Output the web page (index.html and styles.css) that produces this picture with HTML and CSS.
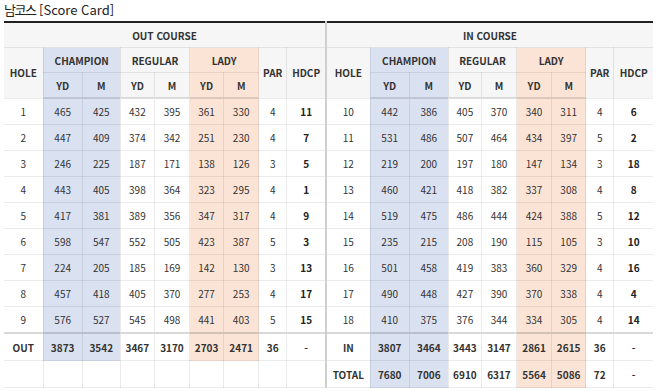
FILE: index.html
```html
<!DOCTYPE html>
<html lang="ko">
<head>
<meta charset="utf-8">
<title>남코스 Score Card</title>
<link rel="stylesheet" href="styles.css">
</head>
<body>
<h1 class="title"><span class="ko">남코스</span> [Score Card]</h1>
<table class="card">
  <colgroup>
    <col class="w39"><col class="w39"><col class="w38"><col class="w34"><col class="w35"><col class="w34"><col class="w35"><col class="w28"><col class="w39 sepcol">
    <col class="w44"><col class="w39"><col class="w39"><col class="w33"><col class="w35"><col class="w35"><col class="w34"><col class="w28"><col class="w39">
  </colgroup>
  <thead>
    <tr class="h1">
      <th colspan="9" class="sep">OUT COURSE</th>
      <th colspan="9">IN COURSE</th>
    </tr>
    <tr class="h2">
      <th rowspan="2">HOLE</th><th colspan="2" class="ch">CHAMPION</th><th colspan="2">REGULAR</th><th colspan="2" class="la">LADY</th><th rowspan="2">PAR</th><th rowspan="2" class="sep">HDCP</th>
      <th rowspan="2">HOLE</th><th colspan="2" class="ch">CHAMPION</th><th colspan="2">REGULAR</th><th colspan="2" class="la">LADY</th><th rowspan="2">PAR</th><th rowspan="2">HDCP</th>
    </tr>
    <tr class="h3">
      <th class="ch">YD</th><th class="ch">M</th><th>YD</th><th>M</th><th class="la">YD</th><th class="la">M</th>
      <th class="ch">YD</th><th class="ch">M</th><th>YD</th><th>M</th><th class="la">YD</th><th class="la">M</th>
    </tr>
  </thead>
  <tbody>
    <tr><td>1</td><td class="ch">465</td><td class="ch">425</td><td>432</td><td>395</td><td class="la">361</td><td class="la">330</td><td>4</td><td class="hd sep">11</td>
        <td>10</td><td class="ch">442</td><td class="ch">386</td><td>405</td><td>370</td><td class="la">340</td><td class="la">311</td><td>4</td><td class="hd">6</td></tr>
    <tr><td>2</td><td class="ch">447</td><td class="ch">409</td><td>374</td><td>342</td><td class="la">251</td><td class="la">230</td><td>4</td><td class="hd sep">7</td>
        <td>11</td><td class="ch">531</td><td class="ch">486</td><td>507</td><td>464</td><td class="la">434</td><td class="la">397</td><td>5</td><td class="hd">2</td></tr>
    <tr><td>3</td><td class="ch">246</td><td class="ch">225</td><td>187</td><td>171</td><td class="la">138</td><td class="la">126</td><td>3</td><td class="hd sep">5</td>
        <td>12</td><td class="ch">219</td><td class="ch">200</td><td>197</td><td>180</td><td class="la">147</td><td class="la">134</td><td>3</td><td class="hd">18</td></tr>
    <tr><td>4</td><td class="ch">443</td><td class="ch">405</td><td>398</td><td>364</td><td class="la">323</td><td class="la">295</td><td>4</td><td class="hd sep">1</td>
        <td>13</td><td class="ch">460</td><td class="ch">421</td><td>418</td><td>382</td><td class="la">337</td><td class="la">308</td><td>4</td><td class="hd">8</td></tr>
    <tr><td>5</td><td class="ch">417</td><td class="ch">381</td><td>389</td><td>356</td><td class="la">347</td><td class="la">317</td><td>4</td><td class="hd sep">9</td>
        <td>14</td><td class="ch">519</td><td class="ch">475</td><td>486</td><td>444</td><td class="la">424</td><td class="la">388</td><td>5</td><td class="hd">12</td></tr>
    <tr><td>6</td><td class="ch">598</td><td class="ch">547</td><td>552</td><td>505</td><td class="la">423</td><td class="la">387</td><td>5</td><td class="hd sep">3</td>
        <td>15</td><td class="ch">235</td><td class="ch">215</td><td>208</td><td>190</td><td class="la">115</td><td class="la">105</td><td>3</td><td class="hd">10</td></tr>
    <tr><td>7</td><td class="ch">224</td><td class="ch">205</td><td>185</td><td>169</td><td class="la">142</td><td class="la">130</td><td>3</td><td class="hd sep">13</td>
        <td>16</td><td class="ch">501</td><td class="ch">458</td><td>419</td><td>383</td><td class="la">360</td><td class="la">329</td><td>4</td><td class="hd">16</td></tr>
    <tr><td>8</td><td class="ch">457</td><td class="ch">418</td><td>405</td><td>370</td><td class="la">277</td><td class="la">253</td><td>4</td><td class="hd sep">17</td>
        <td>17</td><td class="ch">490</td><td class="ch">448</td><td>427</td><td>390</td><td class="la">370</td><td class="la">338</td><td>4</td><td class="hd">4</td></tr>
    <tr><td>9</td><td class="ch">576</td><td class="ch">527</td><td>545</td><td>498</td><td class="la">441</td><td class="la">403</td><td>5</td><td class="hd sep">15</td>
        <td>18</td><td class="ch">410</td><td class="ch">375</td><td>376</td><td>344</td><td class="la">334</td><td class="la">305</td><td>4</td><td class="hd">14</td></tr>
    <tr class="sum first"><td>OUT</td><td class="ch">3873</td><td class="ch">3542</td><td>3467</td><td>3170</td><td class="la">2703</td><td class="la">2471</td><td>36</td><td class="sep">-</td>
        <td>IN</td><td class="ch">3807</td><td class="ch">3464</td><td>3443</td><td>3147</td><td class="la">2861</td><td class="la">2615</td><td>36</td><td>-</td></tr>
    <tr class="sum"><td></td><td></td><td></td><td></td><td></td><td></td><td></td><td></td><td class="sep"></td>
        <td>TOTAL</td><td class="ch">7680</td><td class="ch">7006</td><td>6910</td><td>6317</td><td class="la">5564</td><td class="la">5086</td><td>72</td><td>-</td></tr>
  </tbody>
</table>
</body>
</html>
```

FILE: styles.css
```css
html, body {
  margin: 0;
  padding: 0;
  background: #ffffff;
}
body {
  padding: 2px 4px 0 4px;
  font-family: "Noto Sans CJK KR", "Noto Sans", sans-serif;
  color: #333333;
}
.title {
  margin: 0;
  height: 19px;
  font-size: 13px;
  line-height: 16px;
  font-weight: 400;
  color: #222222;
}
.title .ko {
  letter-spacing: -1.5px;
}
.card {
  width: 649px;
  table-layout: fixed;
  border-collapse: collapse;
  border-top: 2px solid #222222;
  font-size: 10px;
}
.w28 { width: 28px; }
.w33 { width: 33px; }
.w34 { width: 34px; }
.w35 { width: 35px; }
.w38 { width: 38px; }
.w39 { width: 39px; }
.w44 { width: 44px; }
.card th,
.card td {
  padding: 0;
  text-align: center;
  vertical-align: middle;
  border: 1px solid rgba(0, 0, 0, 0.08);
  white-space: nowrap;
}
.card th {
  background: #f6f6f6;
  font-weight: 700;
  color: #333333;
}
.card tr.h1 th,
.card tr.h2 th,
.card tr.h3 th {
  height: 24px;
}
.card tr.h3 th {
  border-bottom: 2px solid rgba(0, 0, 0, 0.12);
}
.card td {
  height: 25px;
  background: #ffffff;
  color: #333333;
}
.card tr.sum td {
  height: 26px;
  font-weight: 700;
}
.card .ch { background: #dae1f1; }
.card .la { background: #fbe4d6; }
.card td.hd { font-weight: 700; color: #222222; }
.card tr.sum.first td { border-top: 2px solid rgba(0, 0, 0, 0.15); }
.card .sep { border-right: 2px solid #cfcfcf; }
.card th:first-child,
.card td:first-child { border-left: none; }
.card th:last-child,
.card td:last-child { border-right: none; }
```
